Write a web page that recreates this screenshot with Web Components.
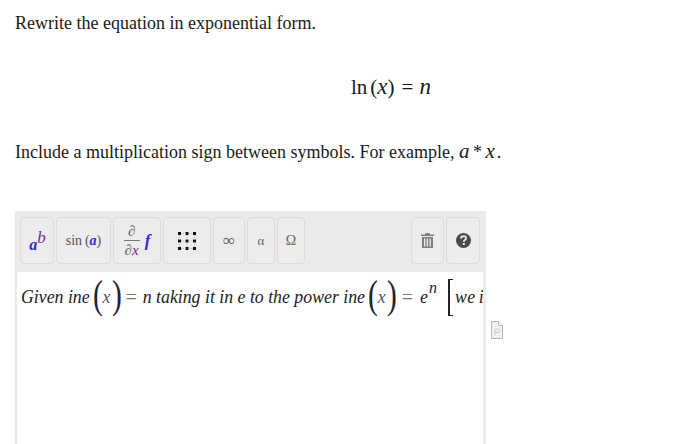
<!DOCTYPE html>
<html>
<head>
<meta charset="utf-8">
<style>
  html, body { margin: 0; height: 444px; overflow: hidden; background: #fff; }
  body { font-family: "Liberation Serif", serif; color: #111; }
  i.m { font-size: 21px; line-height: 1; }
  .star { margin: 0 -1px 0 -1px; }
</style>
</head>
<body>
<question-page>
  <question-text slot="intro" style="--top:13px">Rewrite the equation in exponential form.</question-text>
  <display-equation slot="intro"></display-equation>
  <question-text slot="intro" style="--top:41px">Include a multiplication sign between symbols. For example, <i class="m">a</i> <span class="star">*</span> <i class="m" style="margin-right:2px">x</i>.</question-text>
  <math-input slot="input"></math-input>
</question-page>

<script>
class QuestionPage extends HTMLElement {
  constructor() {
    super();
    this.attachShadow({ mode: "open" });
    this.shadowRoot.innerHTML = `
      <style>
        :host { display: block; width: 698px; height: 444px; overflow: hidden; }
        .input { display: flex; align-items: flex-start; gap: 5px; margin: 49px 0 0 15px; }
      </style>
      <slot name="intro"></slot>
      <div class="input">
        <slot name="input"></slot>
        <file-icon></file-icon>
      </div>
    `;
  }
}

class QuestionText extends HTMLElement {
  constructor() {
    super();
    this.attachShadow({ mode: "open" });
    this.shadowRoot.innerHTML = `
      <style>
        :host {
          display: block;
          padding: var(--top, 0) 0 0 15px;
          font-size: 18px;
          line-height: 21px;
          height: 21px;
          white-space: nowrap;
          color: #1a1a1a;
        }
      </style>
      <slot></slot>
    `;
  }
}

class DisplayEquation extends HTMLElement {
  constructor() {
    super();
    this.attachShadow({ mode: "open" });
    this.shadowRoot.innerHTML = `
      <style>
        :host {
          display: block;
          padding: 41px 0 0 351px;
          font-size: 21px;
          line-height: 25px;
          height: 25px;
          white-space: nowrap;
          color: #1a1a1a;
        }
        i { font-style: italic; font-size: 23px; line-height: 1; }
        .g { margin: 0 6px 0 7px; }
      </style>
      ln<span style="margin-left:3px">(</span><i>x</i>)<span class="g">=</span><i>n</i>
    `;
  }
}

class ToolButton extends HTMLElement {
  constructor() {
    super();
    this.attachShadow({ mode: "open" });
    this.shadowRoot.innerHTML = `
      <style>
        :host {
          display: flex;
          align-items: center;
          justify-content: center;
          box-sizing: border-box;
          height: 47px;
          border: 1px solid #dcdcdc;
          border-radius: 4px;
          background: #ececec;
          color: #555;
          font-size: 14px;
          white-space: nowrap;
        }
      </style>
      <slot></slot>
    `;
  }
}

class MathInput extends HTMLElement {
  constructor() {
    super();
    this.attachShadow({ mode: "open" });
    this.shadowRoot.innerHTML = `
      <style>
        :host {
          display: block;
          box-sizing: border-box;
          width: 471px;
          height: 260px;
          background: #ebebeb;
          padding: 6px 3px 0 2px;
          font-family: "Liberation Serif", serif;
        }
        .bar { display: flex; gap: 2px; padding-left: 3px; padding-right: 3px; height: 47px; }
        .spacer { flex: 1; }
        .b { color: #2b2bd8; font-style: italic; font-weight: bold; }
        .p { color: #7a2a90; font-style: italic; }
        .sup { position: relative; top: -7px; font-size: 17px; margin-left: 0; }
        .ab { font-size: 16px; padding: 8px 0 0 1px; }
        .frac { display: inline-flex; flex-direction: column; align-items: center; font-size: 15px; line-height: 13px; color: #666; padding-top: 1px; }
        .frac span:first-child { border-bottom: 1px solid #777; padding: 0 1px 2px; align-self: stretch; text-align: center; }
        .frac span:last-child { padding: 3px 1px 0; }
        .editor {
          box-sizing: border-box;
          margin-top: 8px;
          height: 200px;
          background: #fff;
          overflow: hidden;
          padding: 6px 0 0 4px;
          display: flex;
          align-items: flex-start;
          white-space: nowrap;
          font-style: italic;
          font-size: 17.8px;
          color: #222;
        }
        .line { display: flex; align-items: center; height: 38px; flex: none; }
        .paren { font-style: normal; font-weight: 100; font-size: 41px; line-height: 38px; transform: translateY(-3px) scaleX(.72); color: #223; margin: 0 -1.8px; }
        .x { color: #555; margin: 0 1px 0 0; }
        .eq { font-style: normal; color: #777; font-size: 20px; margin: 0 6px 0 4px; }
        .eq.wide { margin: 0 7px 0 5px; }
        .first { margin-left: 1px; }
        .exp { position: relative; top: -9px; font-size: 16px; margin: 0 10px 0 1px; }
        .bk { box-sizing: border-box; width: 5px; height: 37px; border: 1px solid #222; border-right: 0; border-left-width: 2px; margin: 0 2px 0 1px; }
        .tail { word-spacing: -2px; letter-spacing: .5px; }
      </style>
      <div class="bar">
        <tool-button style="width:34px"><span class="ab"><span class="b">a</span><span class="p sup">b</span></span></tool-button>
        <tool-button style="width:55px">sin&thinsp;(<span class="b">a</span>)</tool-button>
        <tool-button style="width:48px"><span class="frac"><span>&part;</span><span>&part;<i class="p">x</i></span></span><span class="b" style="margin-left:5px;font-size:17px">f</span></tool-button>
        <tool-button style="width:48px">
          <svg width="18" height="18" viewBox="0 0 18 18">
            <g fill="#111">
              <rect x="0" y="0" width="3" height="3"/><rect x="7.5" y="0" width="3" height="3"/><rect x="15" y="0" width="3" height="3"/>
              <rect x="0" y="7.5" width="3" height="3"/><rect x="7.5" y="7.5" width="3" height="3"/><rect x="15" y="7.5" width="3" height="3"/>
              <rect x="0" y="15" width="3" height="3"/><rect x="7.5" y="15" width="3" height="3"/><rect x="15" y="15" width="3" height="3"/>
            </g>
            <path d="M3 1.500h4.500M10.500 1.500H15M3 9h4.500M10.500 9H15M3 16.500h4.500M10.500 16.500H15M1.500 3v4.500M1.500 10.500V15M9 3v4.500M9 10.500V15M16.500 3v4.500M16.500 10.500V15" stroke="#bbb" stroke-width="1" stroke-dasharray="1 1" fill="none"/>
          </svg>
        </tool-button>
        <tool-button style="width:32px;font-size:17px">&infin;</tool-button>
        <tool-button style="width:28px;font-size:13px"><span style="color:#66635a">&alpha;</span></tool-button>
        <tool-button style="width:28px;font-size:14px"><span style="color:#6b6a55">&Omega;</span></tool-button>
        <div class="spacer"></div>
        <tool-button style="width:33px">
          <svg width="13" height="15" viewBox="0 0 13 15">
            <path fill="#808080" d="M4.500 0h4l.5 1.500h4V3H0V1.500h4zM1 4h11v11H1zM3 5.500v8h1.300v-8zm2.700 0v8h1.300v-8zm2.800 0v8h1.300v-8z" fill-rule="evenodd"/>
          </svg>
        </tool-button>
        <tool-button style="width:34px">
          <svg width="15" height="15" viewBox="0 0 15 15">
            <circle cx="7.500" cy="7.500" r="7.500" fill="#4a4a4a"/>
            <path d="M5 5.600c0-1.500 1.100-2.400 2.600-2.400s2.500.9 2.500 2.100c0 1.900-2.300 1.700-2.300 3.400" fill="none" stroke="#ececec" stroke-width="1.800"/>
            <rect x="6.800" y="10" width="2" height="2" fill="#ececec"/>
          </svg>
        </tool-button>
      </div>
      <div class="editor">
        <div class="line">
          <span>Given ine</span><span class="paren first">(</span><span class="x">x</span><span class="paren">)</span>
          <span class="eq">=</span><span>n taking it in e to the power ine</span><span class="paren first">(</span><span class="x">x</span><span class="paren">)</span>
          <span class="eq wide">=</span><span>e</span><span class="exp">n</span><span class="bk"></span><span class="tail">we i</span>
        </div>
      </div>
    `;
  }
}

class FileIcon extends HTMLElement {
  constructor() {
    super();
    this.attachShadow({ mode: "open" });
    this.shadowRoot.innerHTML = `
      <style>
        :host { display: block; margin-top: 110px; width: 12px; height: 18px; }
        svg { display: block; }
      </style>
      <svg width="12" height="18" viewBox="0 0 12 18">
        <path d="M.5.500h7l4 4v13H.5z" fill="#eef0f6" stroke="#b5b5b5"/>
        <path d="M7.500.500v4h4" fill="#fff" stroke="#b5b5b5"/>
        <path d="M4 14V8h2.500a1.500 1.500 0 0 1 0 3.500H4" fill="none" stroke="#c9c9d6"/>
      </svg>
    `;
  }
}

customElements.define("tool-button", ToolButton);
customElements.define("file-icon", FileIcon);
customElements.define("question-text", QuestionText);
customElements.define("display-equation", DisplayEquation);
customElements.define("math-input", MathInput);
customElements.define("question-page", QuestionPage);
</script>
</body>
</html>
